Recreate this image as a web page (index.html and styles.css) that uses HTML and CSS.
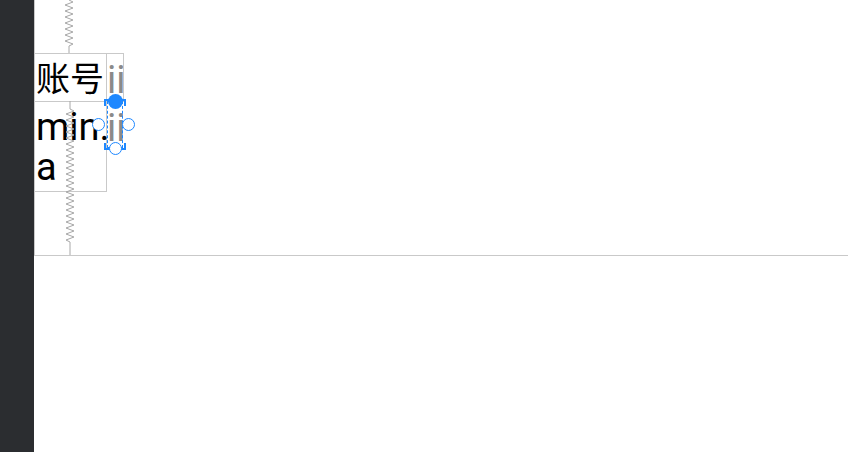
FILE: index.html
```html
<!DOCTYPE html>
<html>
<head>
<meta charset="utf-8">
<link rel="stylesheet" href="styles.css">
</head>
<body>
<div class="app">
  <aside class="sidebar"></aside>
  <main class="workspace">
    <section class="screen">
      <svg class="spring spring-top" width="14" height="53" viewBox="0 0 14 53">
        <polyline points="7,0 11,2 3,5 11,8 3,11 11,14 3,17 11,20 3,23 11,26 3,29 11,32 3,35 11,38 3,41 11,44 7,46 7,53" />
      </svg>
      <div class="view view-label">账号</div>
      <div class="view view-ii view-ii-top">ii</div>
      <div class="view view-value">min.<br>a</div>
      <svg class="spring spring-bottom" width="14" height="154" viewBox="0 0 14 154">
        <polyline points="7,0 7,8 11,10 3,13 11,16 3,19 11,22 3,25 11,28 3,31 11,34 3,37 11,40 3,43 11,46 3,49 11,52 3,55 11,58 3,61 11,64 3,67 11,70 3,73 11,76 3,79 11,82 3,85 11,88 3,91 11,94 3,97 11,100 3,103 11,106 3,109 11,112 3,115 11,118 3,121 11,124 3,127 11,130 3,133 11,136 3,139 7,141 7,154" />
      </svg>
      <div class="view view-ii view-ii-sel">ii</div>
      <div class="selection">
        <span class="bracket tl"></span><span class="bracket tr"></span>
        <span class="bracket bl"></span><span class="bracket br"></span>
        <span class="handle filled top"></span>
        <span class="handle left"></span>
        <span class="handle right"></span>
        <span class="handle bottom"></span>
      </div>
    </section>
  </main>
</div>
</body>
</html>
```
FILE: styles.css
```css
html, body {
  margin: 0;
  padding: 0;
  background: #ffffff;
  overflow: hidden;
}
.app {
  display: flex;
  width: 848px;
  height: 452px;
}
.sidebar {
  width: 34px;
  flex: none;
  background: #2b2d30;
}
.workspace {
  flex: 1;
  background: #ffffff;
}
.screen {
  position: relative;
  height: 255px;
  border-left: 1px solid #c9c9c9;
  border-bottom: 1px solid #c9c9c9;
}
.spring {
  position: absolute;
  overflow: visible;
}
.spring polyline {
  fill: none;
  stroke: #a8a8a8;
  stroke-width: 1;
}
.spring-top { left: 27px; top: 0; }
.spring-bottom { left: 28px; top: 101px; }
.view {
  position: absolute;
  box-sizing: border-box;
  border: 1px solid #c9c9c9;
  color: #000;
}
.view-label {
  left: -1px;
  top: 53px;
  width: 73px;
  height: 49px;
  font-family: "Noto Sans CJK SC", sans-serif;
  font-size: 34px;
  line-height: 46px;
  padding-left: 1px;
  white-space: nowrap;
  overflow: visible;
}
.view-value {
  left: -1px;
  top: 101px;
  width: 73px;
  height: 91px;
  font-family: Roboto, sans-serif;
  font-size: 38px;
  line-height: 40px;
  padding-top: 5px;
  padding-left: 1px;
}
.view-ii {
  font-family: Roboto, sans-serif;
  font-size: 38px;
  color: #8a8a8a;
  text-align: center;
  overflow: hidden;
  letter-spacing: 0;
}
.view-ii-top {
  left: 71px;
  top: 53px;
  width: 18px;
  height: 49px;
  line-height: 44px;
  padding-top: 4px;
}
.view-ii-sel {
  left: 71px;
  top: 101px;
  width: 18px;
  height: 48px;
  line-height: 44px;
  padding-top: 4px;
  border-color: transparent;
}
.selection {
  position: absolute;
  left: 72px;
  top: 101px;
  width: 16px;
  height: 47px;
  box-sizing: border-box;
  border: 1px dashed #1e88ff;
}
.bracket {
  position: absolute;
  width: 4px;
  height: 5px;
  border: 0 solid #1e88ff;
}
.bracket.tl { left: -4px; top: -3px; border-left-width: 2px; border-top-width: 2px; }
.bracket.tr { right: -4px; top: -3px; border-right-width: 2px; border-top-width: 2px; }
.bracket.bl { left: -4px; bottom: -3px; border-left-width: 2px; border-bottom-width: 2px; }
.bracket.br { right: -4px; bottom: -3px; border-right-width: 2px; border-bottom-width: 2px; }
.handle {
  position: absolute;
  width: 13px;
  height: 13px;
  box-sizing: border-box;
  border-radius: 50%;
  border: 1.5px solid #1e88ff;
  background: #ffffff;
}
.handle.filled {
  width: 15px;
  height: 15px;
  background: #1e88ff;
  border: none;
  left: 0px;
  top: -8px;
}
.handle.left { left: -16px; top: 16px; }
.handle.right { left: 14px; top: 16px; }
.handle.bottom { left: 1px; top: 40px; }
```
